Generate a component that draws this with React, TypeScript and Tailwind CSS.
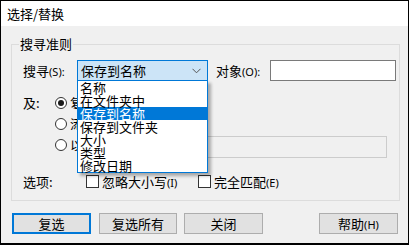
import React from 'react';

const items = ['名称', '在文件夹中', '保存到名称', '保存到文件夹', '大小', '类型', '修改日期'];

const Key: React.FC<{ k: string; colon?: boolean }> = ({ k, colon }) => (
  <span className="font-['Noto_Sans',sans-serif] text-[11px]">({k}){colon ? ':' : ''}</span>
);

// label is clipped where the open combo list covers it
const Radio: React.FC<{ checked?: boolean; label: string }> = ({ checked, label }) => (
  <div className="flex items-center h-[21px]">
    <div className="w-[12px] h-[12px] rounded-full border border-[#333] bg-white flex items-center justify-center shrink-0">
      {checked && <div className="w-[6px] h-[6px] rounded-full bg-[#1a1a1a]" />}
    </div>
    <span className="ml-[3px] w-[7px] overflow-hidden whitespace-nowrap">{label}</span>
  </div>
);

const Check: React.FC<{ label: string; k: string }> = ({ label, k }) => (
  <div className="flex items-center">
    <div className="w-[13px] h-[13px] border border-[#333] bg-white" />
    <span className="ml-[3px] whitespace-nowrap">{label}<Key k={k} /></span>
  </div>
);

export default function App() {
  return (
    <div className="relative w-[409px] h-[245px] bg-white font-['Noto_Sans_CJK_SC',sans-serif] text-[13px] text-black leading-none">
      <div className="w-full h-full border-l border-t border-r border-b-2 border-black flex flex-col bg-[#f0f0f0]">
        <div className="h-[25px] bg-white flex items-center pl-[6px] shrink-0">选择/替换</div>

        <div className="pl-[10px] pt-[10px]">
          <fieldset className="w-[389px] h-[165px] border border-[#dcdcdc] p-0 m-0">
            <legend className="ml-[7px] px-[1px] leading-[16px]">搜寻准则</legend>

            {/* search row */}
            <div className="mt-[8px] h-[21px] flex items-center pl-[11px]">
              <span className="w-[54px] whitespace-nowrap">搜寻<Key k="S" colon /></span>
              <div className="w-[131px] h-[21px] border border-[#0078d7] bg-[#cce4f7] flex items-center pl-[3px] pr-[4px]">
                <span className="flex-1">保存到名称</span>
                <svg width="9" height="6" viewBox="0 0 9 6" className="mr-[2px]">
                  <path d="M0.5 0.8 L4.5 4.8 L8.5 0.8" fill="none" stroke="#555" strokeWidth="1" />
                </svg>
              </div>
              <span className="ml-[8px] w-[54px] whitespace-nowrap">对象<Key k="O" colon /></span>
              <div className="w-[126px] h-[21px] border border-[#7a7a7a] bg-white" />
            </div>

            {/* scope rows */}
            <div className="mt-[11px] flex pl-[11px] pr-[12px]">
              <span className="w-[32px] h-[21px] flex items-center">及:</span>
              <div className="flex flex-col flex-1">
                <Radio checked label="复选新的" />
                <Radio label="添加到当前选择" />
                <div className="flex">
                  <Radio label="以下列范围选择" />
                  <div className="ml-auto mt-[2px] w-[186px] h-[22px] border border-[#cccccc] bg-[#f0f0f0]" />
                </div>
              </div>
            </div>

            {/* options row */}
            <div className="mt-[13px] h-[20px] flex items-center pl-[11px]">
              <span className="w-[63px]">选项:</span>
              <div className="w-[112px]"><Check label="忽略大小写" k="I" /></div>
              <Check label="完全匹配" k="E" />
            </div>
          </fieldset>
        </div>

        <div className="mt-[12px] flex pl-[11px]">
          <button className="w-[79px] h-[21px] border-2 border-[#0078d7] bg-[#e1e1e1]">复选</button>
          <button className="ml-[8px] w-[78px] h-[21px] border border-[#adadad] bg-[#e1e1e1]">复选所有</button>
          <button className="ml-[7px] w-[79px] h-[21px] border border-[#adadad] bg-[#e1e1e1]">关闭</button>
          <button className="ml-[56px] w-[79px] h-[21px] border border-[#adadad] bg-[#e1e1e1]">帮助<Key k="H" /></button>
        </div>
      </div>

      {/* open combo list */}
      <div className="absolute left-[77px] top-[80px] w-[131px] h-[93px] border border-[#0078d7] bg-white shadow-[3px_3px_3px_rgba(0,0,0,0.3)]">
        {items.map((t, i) => (
          <div key={t} className={`h-[13px] leading-[13px] pl-[2px] whitespace-nowrap ${i === 2 ? 'bg-[#0078d7] text-white' : ''}`}>{t}</div>
        ))}
      </div>
    </div>
  );
}
